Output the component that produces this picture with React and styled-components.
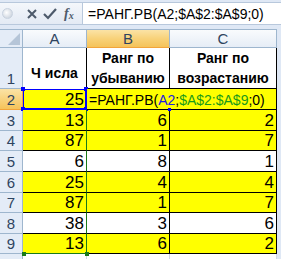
import React from "react";
import styled, { createGlobalStyle, css } from "styled-components";

const GlobalStyle = createGlobalStyle`
  html, body {
    margin: 0;
    padding: 0;
    background: #dfe8f5;
    width: 281px;
    height: 259px;
    overflow: hidden;
  }
`;

const cellFont = `"Liberation Sans", Arial, sans-serif`;

const rows = [
  { n: 2, a: 25, b: 6, c: 2, hl: true },
  { n: 3, a: 13, b: 6, c: 2, hl: true },
  { n: 4, a: 87, b: 1, c: 7, hl: true },
  { n: 5, a: 6, b: 8, c: 1, hl: false },
  { n: 6, a: 25, b: 4, c: 4, hl: true },
  { n: 7, a: 87, b: 1, c: 7, hl: true },
  { n: 8, a: 38, b: 3, c: 6, hl: false },
  { n: 9, a: 13, b: 6, c: 2, hl: true },
];

const rowHeights = [21, 21, 20, 21, 21, 20, 21, 20];

function App() {
  return (
    <Page>
      <GlobalStyle />
      <FormulaBar>
        <IconBox>
          <NameKnob />
          <BarIcon>
            <svg width="12" height="12" viewBox="0 0 12 12">
              <path d="M2 2 L10 10 M10 2 L2 10" stroke="#4d5a6b" strokeWidth="2" />
            </svg>
          </BarIcon>
          <BarIcon>
            <svg width="14" height="12" viewBox="0 0 14 12">
              <path d="M1 6 L5 10 L13 1" stroke="#4d5a6b" strokeWidth="2.2" fill="none" />
            </svg>
          </BarIcon>
          <Fx>
            f<sub>x</sub>
          </Fx>
        </IconBox>
        <FormulaInput>=РАНГ.РВ(A2;$A$2:$A$9;0)</FormulaInput>
      </FormulaBar>
      <Sheet>
        <Corner>
          <svg width="12" height="12" viewBox="0 0 12 12">
            <path d="M12 0 L12 12 L0 12 Z" fill="#b5c5d8" />
          </svg>
        </Corner>
        <ColHead>A</ColHead>
        <ColHead $active>B</ColHead>
        <ColHead>C</ColHead>
        <Filler />

        <RowHead style={{ height: 41 }}>1</RowHead>
        <TitleCell $col="a">Ч исла</TitleCell>
        <TitleCell>
          Ранг по
          <br />
          убыванию
        </TitleCell>
        <TitleCell>
          Ранг по
          <br />
          возрастанию
        </TitleCell>
        <Filler />

        {rows.map((r, i) => (
          <React.Fragment key={r.n}>
            <RowHead $active={r.n === 2} style={{ height: rowHeights[i] }}>
              {r.n}
            </RowHead>
            <ACell $hl={r.hl} $first={r.n === 2} $last={r.n === 9}>
              {r.a}
              {r.n === 2 && (
                <>
                  <Handle $c="#0000ff" style={{ left: -2, top: -2 }} />
                  <Handle $c="#0000ff" style={{ right: -2, top: -2 }} />
                  <Handle $c="#0000ff" style={{ left: -2, bottom: -2 }} />
                  <Handle $c="#0000ff" style={{ right: -2, bottom: -2 }} />
                </>
              )}
              {r.n === 9 && (
                <>
                  <Handle $c="#1a7a1a" style={{ left: -1, bottom: -3 }} />
                  <Handle $c="#1a7a1a" style={{ right: -3, bottom: -3 }} />
                </>
              )}
            </ACell>
            {r.n === 2 ? (
              <EditCell>
                =РАНГ.РВ(<Ref $c="#2020e0">A2</Ref>;<Ref $c="#1a9a1a">$A$2:$A$9</Ref>;0)
                <Handle $c="#0000ff" style={{ left: 81, bottom: -2, width: 3, height: 3 }} />
              </EditCell>
            ) : (
              <>
                <Cell $hl={r.hl}>{r.b}</Cell>
                <Cell $hl={r.hl}>{r.c}</Cell>
              </>
            )}
            <Filler />
          </React.Fragment>
        ))}

        <RowHead style={{ height: 6 }} />
        <BlankCell />
        <BlankCell />
        <BlankCell />
        <Filler />
      </Sheet>
    </Page>
  );
}

export default App;

const Page = styled.div`
  width: 281px;
  height: 259px;
  overflow: hidden;
  background: #dfe8f5;
  font-family: ${cellFont};
`;

const FormulaBar = styled.div`
  display: flex;
  height: 21px;
  margin-top: 2px;
  border-top: 1px solid #b8c8dc;
  border-bottom: 1px solid #b8c8dc;
`;

const IconBox = styled.div`
  width: 82px;
  display: flex;
  align-items: center;
  background: linear-gradient(#f4f7fb, #e3eaf4);
`;

const NameKnob = styled.div`
  width: 9px;
  height: 9px;
  margin-left: 2px;
  margin-right: 10px;
  border-radius: 50%;
  background: radial-gradient(circle at 40% 40%, #ffffff, #bfc9d6);
  border: 1px solid #c8d2df;
`;

const BarIcon = styled.div`
  display: flex;
  align-items: center;
  justify-content: center;
  width: 18px;
  height: 18px;
`;

const Fx = styled.div`
  margin-left: 5px;
  font-family: "Liberation Serif", serif;
  font-style: italic;
  font-weight: bold;
  font-size: 14px;
  color: #4d5a6b;
  sub {
    font-size: 10px;
    vertical-align: -1px;
  }
`;

const FormulaInput = styled.div`
  flex: 1;
  background: #ffffff;
  border-left: 1px solid #b8c8dc;
  display: flex;
  align-items: center;
  padding-left: 5px;
  font-size: 14px;
  color: #000;
  white-space: nowrap;
`;

const Sheet = styled.div`
  margin-top: 4px;
  display: grid;
  grid-template-columns: 23px 64px 83px 107px 4px;
  grid-auto-rows: auto;
`;

const headBase = css`
  display: flex;
  align-items: center;
  justify-content: center;
  color: #2e4460;
  font-size: 15px;
  box-sizing: border-box;
`;

const Corner = styled.div`
  height: 19px;
  background: #e4ecf7;
  border-top: 1px solid #9eb6ce;
  border-right: 1px solid #9eb6ce;
  border-bottom: 1px solid #9eb6ce;
  box-sizing: border-box;
  display: flex;
  align-items: flex-end;
  justify-content: flex-end;
  padding: 0 2px 2px 0;
`;

const ColHead = styled.div`
  ${headBase};
  height: 19px;
  border-top: 1px solid #9eb6ce;
  border-right: 1px solid #9eb6ce;
  border-bottom: 1px solid ${(p) => (p.$active ? "#f2a43b" : "#9eb6ce")};
  background: ${(p) =>
    p.$active
      ? "linear-gradient(#fbe3a6, #f8d27a 50%, #f5c35a)"
      : "linear-gradient(#f9fbfd, #e6edf6)"};
`;

const Filler = styled.div`
  background: #dfe8f5;
`;

const RowHead = styled.div`
  ${headBase};
  align-items: flex-end;
  padding-bottom: 1px;
  border-right: 1px solid ${(p) => (p.$active ? "#f2a43b" : "#9eb6ce")};
  border-bottom: 1px solid ${(p) => (p.$active ? "#f2a43b" : "#9eb6ce")};
  background: ${(p) =>
    p.$active ? "linear-gradient(#fbe3a6, #f5c35a)" : "#e4ecf7"};
`;

const TitleCell = styled.div`
  background: #ffffff;
  font-weight: bold;
  font-size: 14px;
  line-height: 20px;
  text-align: center;
  box-sizing: border-box;
  display: flex;
  align-items: ${(p) => (p.$col === "a" ? "center" : "flex-end")};
  justify-content: center;
  padding-top: ${(p) => (p.$col === "a" ? "9px" : "0")};
  border-right: 1px solid #000;
  border-bottom: 1px solid ${(p) => (p.$col === "a" ? "#ffffff" : "#000")};
`;

const Cell = styled.div`
  background: ${(p) => (p.$hl ? "#ffff00" : "#ffffff")};
  font-size: 17px;
  line-height: 19px;
  display: flex;
  align-items: flex-end;
  justify-content: flex-end;
  padding: 0 2px 0 0;
  box-sizing: border-box;
  border-right: 1px solid #000;
  border-bottom: 1px solid #000;
  color: #000;
`;

const ACell = styled(Cell)`
  position: relative;
  border-right: 1px solid #1a7a1a;
  ${(p) =>
    p.$first &&
    css`
      box-shadow: inset 1px 1px 0 #0000ff, inset -1px -1px 0 #0000ff;
      border-right: 1px solid #0000ff;
      border-bottom: 1px solid #0000ff;
    `}
  ${(p) =>
    p.$last &&
    css`
      border-bottom: 1px solid #1a7a1a;
    `}
`;

const BlankCell = styled.div`
  background: #ffffff;
  border-right: 1px solid #d0d7e5;
`;

const EditCell = styled.div`
  grid-column: span 2;
  position: relative;
  background: #ffff00;
  font-size: 14px;
  display: flex;
  align-items: flex-end;
  padding: 0 0 1px 2px;
  box-sizing: border-box;
  border-right: 1px solid #000;
  border-bottom: 1px solid #000;
  white-space: nowrap;
`;

const Ref = styled.span`
  color: ${(p) => p.$c};
`;

const Handle = styled.span`
  position: absolute;
  width: 4px;
  height: 4px;
  background: ${(p) => p.$c};
`;
